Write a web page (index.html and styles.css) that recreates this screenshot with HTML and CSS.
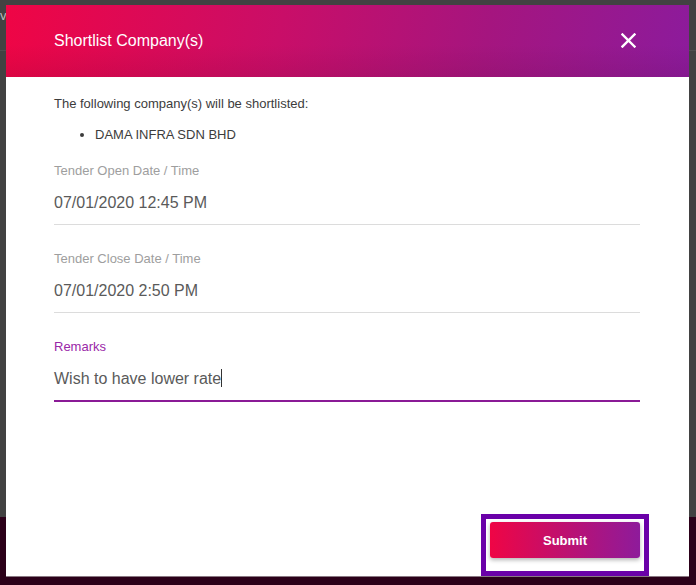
FILE: index.html
```html
<!DOCTYPE html>
<html>
<head>
<meta charset="utf-8">
<link rel="stylesheet" href="styles.css">
</head>
<body>
<div class="backdrop">
  <div class="bg-top"><span class="bg-letter">v</span><div class="bg-line"></div></div>
  <div class="bg-bottom"></div>
</div>
<div class="modal">
  <div class="modal-header">
    <div class="modal-title">Shortlist Company(s)</div>
    <svg class="close" width="15" height="15" viewBox="0 0 15 15"><path d="M1.5 1.5 L13.5 13.5 M13.5 1.5 L1.5 13.5" stroke="#fff" stroke-width="2.4" stroke-linecap="square"/></svg>
  </div>
  <div class="modal-body">
    <p class="intro">The following company(s) will be shortlisted:</p>
    <ul class="companies"><li>DAMA INFRA SDN BHD</li></ul>
    <div class="field">
      <div class="label">Tender Open Date / Time</div>
      <div class="value">07/01/2020 12:45 PM</div>
    </div>
    <div class="field">
      <div class="label">Tender Close Date / Time</div>
      <div class="value">07/01/2020 2:50 PM</div>
    </div>
    <div class="field active">
      <div class="label">Remarks</div>
      <div class="value">Wish to have lower rate<span class="caret"></span></div>
    </div>
  </div>
  <div class="modal-footer">
    <button class="submit">Submit</button>
  </div>
</div>
<div class="highlight"></div>
</body>
</html>
```
FILE: styles.css
```css
html, body {
  margin: 0;
  padding: 0;
}
body {
  width: 696px;
  height: 585px;
  overflow: hidden;
  position: relative;
  font-family: "Liberation Sans", Arial, sans-serif;
  background: #424242;
}
.backdrop {
  display: flex;
  flex-direction: column;
  height: 585px;
}
.bg-top {
  height: 517px;
  background: #424242;
  position: relative;
}
.bg-letter {
  position: absolute;
  left: 0;
  top: 8px;
  font-size: 13px;
  color: #bbb;
}
.bg-line {
  position: absolute;
  left: 0;
  right: 0;
  top: 50px;
  height: 1px;
  background: #4f4f4f;
}
.bg-bottom {
  flex: 1;
  background: #2b0019;
}
.modal {
  position: absolute;
  left: 6px;
  top: 5px;
  width: 683px;
  height: 571px;
  background: #fff;
  display: flex;
  flex-direction: column;
  box-shadow: 0 1px 0 rgba(200,200,200,0.6);
}
.modal-header {
  height: 72px;
  box-sizing: border-box;
  padding: 26px 53px 0 48px;
  display: flex;
  justify-content: space-between;
  align-items: flex-start;
  background:
    linear-gradient(to bottom, rgba(0,0,0,0) 55%, rgba(60,0,30,0.10) 100%),
    linear-gradient(100deg, #ef0545 0%, #c90e68 40%, #a5157f 70%, #8c1b9c 100%);
}
.modal-title {
  color: #fff;
  font-size: 16px;
  line-height: 20px;
}
.close {
  margin-top: 2px;
}
.modal-body {
  flex: 1;
  padding: 19px 49px 0 48px;
}
.intro {
  margin: 0;
  font-size: 13px;
  line-height: 16px;
  color: #3c3c3c;
}
.companies {
  margin: 15px 0 0 0;
  padding-left: 41px;
  font-size: 13px;
  line-height: 16px;
  color: #3c3c3c;
}
.field {
  padding-bottom: 11px;
  border-bottom: 1px solid #dcdcdc;
  margin-top: 26px;
}
.companies + .field {
  margin-top: 20px;
}
.label {
  font-size: 13px;
  line-height: 16px;
  color: #9e9e9e;
}
.value {
  margin-top: 14px;
  font-size: 16px;
  line-height: 20px;
  color: #5a5a5a;
}
.field.active {
  border-bottom: 2px solid #8a1a96;
}
.field.active .label {
  color: #9a27a8;
}
.caret {
  display: inline-block;
  width: 1px;
  height: 18px;
  background: #333;
  vertical-align: -3px;
}
.modal-footer {
  display: flex;
  justify-content: flex-end;
  padding: 0 49px 18px 0;
}
.submit {
  width: 150px;
  height: 36px;
  border: none;
  border-radius: 3px;
  color: #fff;
  font-family: "Liberation Sans", Arial, sans-serif;
  font-size: 13px;
  font-weight: bold;
  background: linear-gradient(to right, #ef0545 0%, #c20f6c 45%, #8e1b9b 100%);
  box-shadow: 0 2px 4px rgba(0,0,0,0.3);
}
.highlight {
  position: absolute;
  left: 481px;
  top: 514px;
  width: 168px;
  height: 62px;
  box-sizing: border-box;
  border: 5px solid #6a00a8;
}
```
